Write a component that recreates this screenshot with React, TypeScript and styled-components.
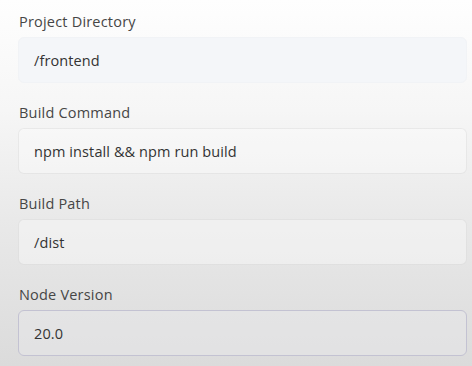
import React from 'react';
import styled, { createGlobalStyle } from 'styled-components';

const GlobalStyle = createGlobalStyle`
  html, body {
    margin: 0;
    padding: 0;
  }
  body {
    width: 472px;
    height: 366px;
    overflow: hidden;
    background: linear-gradient(180deg, #fefefe 0%, #f6f6f6 30%, #e9e9e9 60%, #dbdbdb 100%);
    font-family: 'Open Sans', 'Liberation Sans', sans-serif;
  }
`;

const Form = styled.div`
  display: flex;
  flex-direction: column;
  gap: 20px;
  padding: 12px 5px 0 18px;
`;

const Field = styled.div`
  display: flex;
  flex-direction: column;
  gap: 5px;
`;

const Label = styled.label`
  padding-left: 1px;
  font-size: 14.5px;
  line-height: 20px;
  color: #464646;
  letter-spacing: 0.2px;
`;

const Input = styled.div<{ $variant?: 'filled' | 'outlined' | 'focused' }>`
  height: 46px;
  box-sizing: border-box;
  display: flex;
  align-items: center;
  padding: 0 15px;
  border-radius: 6px;
  font-size: 14.5px;
  letter-spacing: 0.1px;
  color: #333333;
  background: ${(p) =>
    p.$variant === 'filled'
      ? '#f4f6f9'
      : p.$variant === 'focused'
      ? 'rgba(230, 230, 232, 0.6)'
      : 'rgba(255, 255, 255, 0.35)'};
  border: 1px solid
    ${(p) =>
      p.$variant === 'filled'
        ? '#f1f3f6'
        : p.$variant === 'focused'
        ? '#c3c2d2'
        : 'rgba(0, 0, 0, 0.06)'};
`;

const fields: { label: string; value: string; variant: 'filled' | 'outlined' | 'focused' }[] = [
  { label: 'Project Directory', value: '/frontend', variant: 'filled' },
  { label: 'Build Command', value: 'npm install && npm run build', variant: 'outlined' },
  { label: 'Build Path', value: '/dist', variant: 'outlined' },
  { label: 'Node Version', value: '20.0', variant: 'focused' },
];

const App: React.FC = () => (
  <>
    <GlobalStyle />
    <Form>
      {fields.map((f) => (
        <Field key={f.label}>
          <Label>{f.label}</Label>
          <Input $variant={f.variant}>{f.value}</Input>
        </Field>
      ))}
    </Form>
  </>
);

export default App;
